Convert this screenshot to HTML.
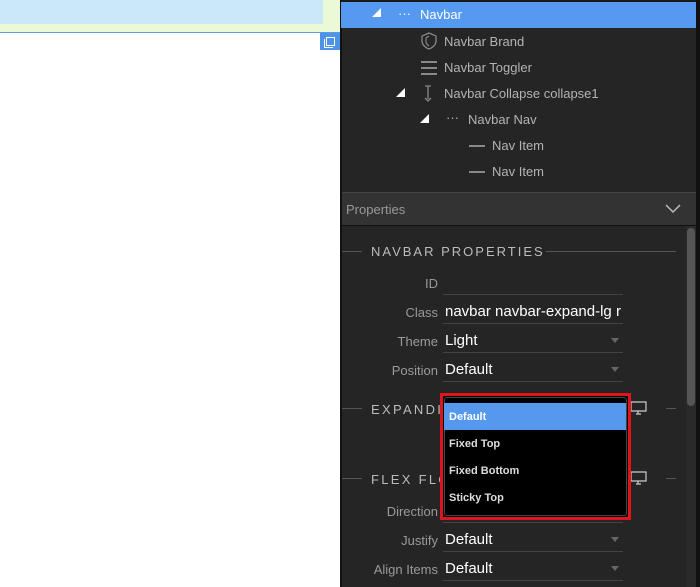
<!DOCTYPE html>
<html><head><style>
*{margin:0;padding:0;box-sizing:border-box}
body{width:700px;height:587px;overflow:hidden;background:#fff;font-family:"Liberation Sans",sans-serif;position:relative}
.a{position:absolute}
.t{color:#b4b4b4;font-size:13px;white-space:nowrap}
.lbl{color:#9a9a9a;font-size:13px;text-align:right;width:98px;left:340px}
.val{color:#fff;font-size:15px;left:445px}
.ul{left:443px;width:180px;height:1px;background:#444}
.arr{width:0;height:0;border-left:4px solid transparent;border-right:4px solid transparent;border-top:5px solid #666;left:611px}
.tri{width:0;height:0;border-left:9px solid transparent;border-bottom:9px solid #fff}
</style></head><body>
<div class="a" style="left:0;top:0;width:340px;height:32px;background:#ecf9d6"></div>
<div class="a" style="left:0;top:0;width:323px;height:24px;background:#cbe8f9"></div>
<div class="a" style="left:0;top:32px;width:340px;height:1px;background:#5b9be6"></div>
<div class="a" style="left:320px;top:33px;width:20px;height:17px;background:#4d93e6"></div>
<div class="a" style="left:326px;top:37px;width:9px;height:9px;border:1px solid #fff"></div>
<div class="a" style="left:324px;top:39px;width:9px;height:9px;border:1px solid #fff;border-right:none;border-top:none"></div>
<div class="a" style="left:340px;top:0;width:360px;height:587px;background:#252525"></div>
<div class="a" style="left:340px;top:0;width:2px;height:587px;background:#111"></div>
<div class="a" style="left:696px;top:0;width:4px;height:587px;background:#111"></div>
<div class="a" style="left:342px;top:0;width:354px;height:2px;background:#1a1a1a"></div>
<div class="a" style="left:341px;top:2px;width:355px;height:26px;background:#559af0"></div>
<div class="a tri" style="left:372px;top:8px"></div>
<div class="a t" style="left:398px;top:6px;color:#fff">···</div>
<div class="a t" style="left:420px;top:7px;color:#fff">Navbar</div>
<svg class="a" style="left:420px;top:32px" width="18" height="18" viewBox="0 0 18 18"><path d="M9 1L16 4V9C16 13 12 16 9 17C6 16 2 13 2 9V4Z" fill="none" stroke="#888" stroke-width="1.3"/><path d="M9 4L6 6V10C6 12 8 13 9 14" fill="none" stroke="#888" stroke-width="1.2"/></svg>
<div class="a t" style="left:444px;top:34px">Navbar Brand</div>
<div class="a" style="left:421px;top:61px;width:16px;height:1.5px;background:#888;box-shadow:0 6px 0 #888,0 12px 0 #888"></div>
<div class="a t" style="left:444px;top:60px">Navbar Toggler</div>
<div class="a tri" style="left:396px;top:88px"></div>
<svg class="a" style="left:421px;top:84px" width="14" height="18" viewBox="0 0 14 18"><path d="M4 2H10M7 2V15M4 14L7 17L10 14" fill="none" stroke="#888" stroke-width="1.3"/></svg>
<div class="a t" style="left:444px;top:86px">Navbar Collapse collapse1</div>
<div class="a tri" style="left:420px;top:114px"></div>
<div class="a t" style="left:446px;top:110px">···</div>
<div class="a t" style="left:468px;top:112px">Navbar Nav</div>
<div class="a" style="left:469px;top:145px;width:16px;height:1.5px;background:#888"></div>
<div class="a t" style="left:492px;top:138px">Nav Item</div>
<div class="a" style="left:469px;top:171px;width:16px;height:1.5px;background:#888"></div>
<div class="a t" style="left:492px;top:164px">Nav Item</div>
<div class="a" style="left:342px;top:192px;width:354px;height:34px;background:#333;border-top:1px solid #444;border-bottom:1px solid #111"></div>
<div class="a t" style="left:346px;top:202px;color:#999">Properties</div>
<svg class="a" style="left:664px;top:203px" width="18" height="12"><path d="M2 2L9 9L16 2" fill="none" stroke="#bbb" stroke-width="1.5"/></svg>
<div class="a" style="left:686px;top:226px;width:10px;height:361px;background:#2a2a2a"></div>
<div class="a" style="left:687px;top:228px;width:8px;height:178px;background:#555;border-radius:4px"></div>
<div class="a" style="left:342px;top:251px;width:20px;height:1px;background:#555"></div>
<div class="a" style="left:546px;top:251px;width:130px;height:1px;background:#555"></div>
<div class="a" style="left:371px;top:244px;color:#bbb;font-size:13px;letter-spacing:2px">NAVBAR PROPERTIES</div>
<div class="a lbl" style="top:276px">ID</div><div class="a ul" style="top:294px"></div>
<div class="a lbl" style="top:305px">Class</div><div class="a val" style="top:303px">navbar navbar-expand-lg r</div><div class="a ul" style="top:323px"></div>
<div class="a lbl" style="top:334px">Theme</div><div class="a val" style="top:332px">Light</div><div class="a ul" style="top:352px"></div><div class="a arr" style="top:338px"></div>
<div class="a lbl" style="top:363px">Position</div><div class="a val" style="top:361px">Default</div><div class="a ul" style="top:381px"></div><div class="a arr" style="top:367px"></div>
<div class="a" style="left:342px;top:408px;width:20px;height:1px;background:#555"></div>
<div class="a" style="left:666px;top:408px;width:10px;height:1px;background:#555"></div>
<div class="a" style="left:371px;top:402px;color:#bbb;font-size:13px;letter-spacing:2.3px">EXPANDI</div>
<div class="a" style="left:342px;top:478px;width:20px;height:1px;background:#555"></div>
<div class="a" style="left:666px;top:478px;width:10px;height:1px;background:#555"></div>
<div class="a" style="left:371px;top:472px;color:#bbb;font-size:13px;letter-spacing:2.3px">FLEX FLO</div>
<svg class="a" style="left:630px;top:401px" width="18" height="15"><path d="M1 1H16V10H1ZM6 13H11M8 10V13" fill="none" stroke="#ccc" stroke-width="1.2"/></svg>
<svg class="a" style="left:630px;top:471px" width="18" height="15"><path d="M1 1H16V10H1ZM6 13H11M8 10V13" fill="none" stroke="#ccc" stroke-width="1.2"/></svg>
<div class="a lbl" style="top:504px">Direction</div><div class="a ul" style="top:522px"></div>
<div class="a lbl" style="top:533px">Justify</div><div class="a val" style="top:531px">Default</div><div class="a ul" style="top:551px"></div><div class="a arr" style="top:537px"></div>
<div class="a lbl" style="top:562px">Align Items</div><div class="a val" style="top:560px">Default</div><div class="a ul" style="top:580px"></div><div class="a arr" style="top:566px"></div>
<div class="a" style="left:440px;top:393px;width:191px;height:127px;border:3px solid #e0141c;background:#000"></div>
<div class="a" style="left:444px;top:397px;width:183px;height:119px;border:1px solid #444;border-radius:3px;background:#000"></div>
<div class="a" style="left:444px;top:403px;width:182px;height:27px;background:#5599ee"></div>
<div class="a" style="left:449px;top:411px;color:#fff;font-size:11px;font-weight:bold">Default</div>
<div class="a" style="left:449px;top:438px;color:#ddd;font-size:11px;font-weight:bold">Fixed Top</div>
<div class="a" style="left:449px;top:465px;color:#ddd;font-size:11px;font-weight:bold">Fixed Bottom</div>
<div class="a" style="left:449px;top:492px;color:#ddd;font-size:11px;font-weight:bold">Sticky Top</div>
</body></html>
